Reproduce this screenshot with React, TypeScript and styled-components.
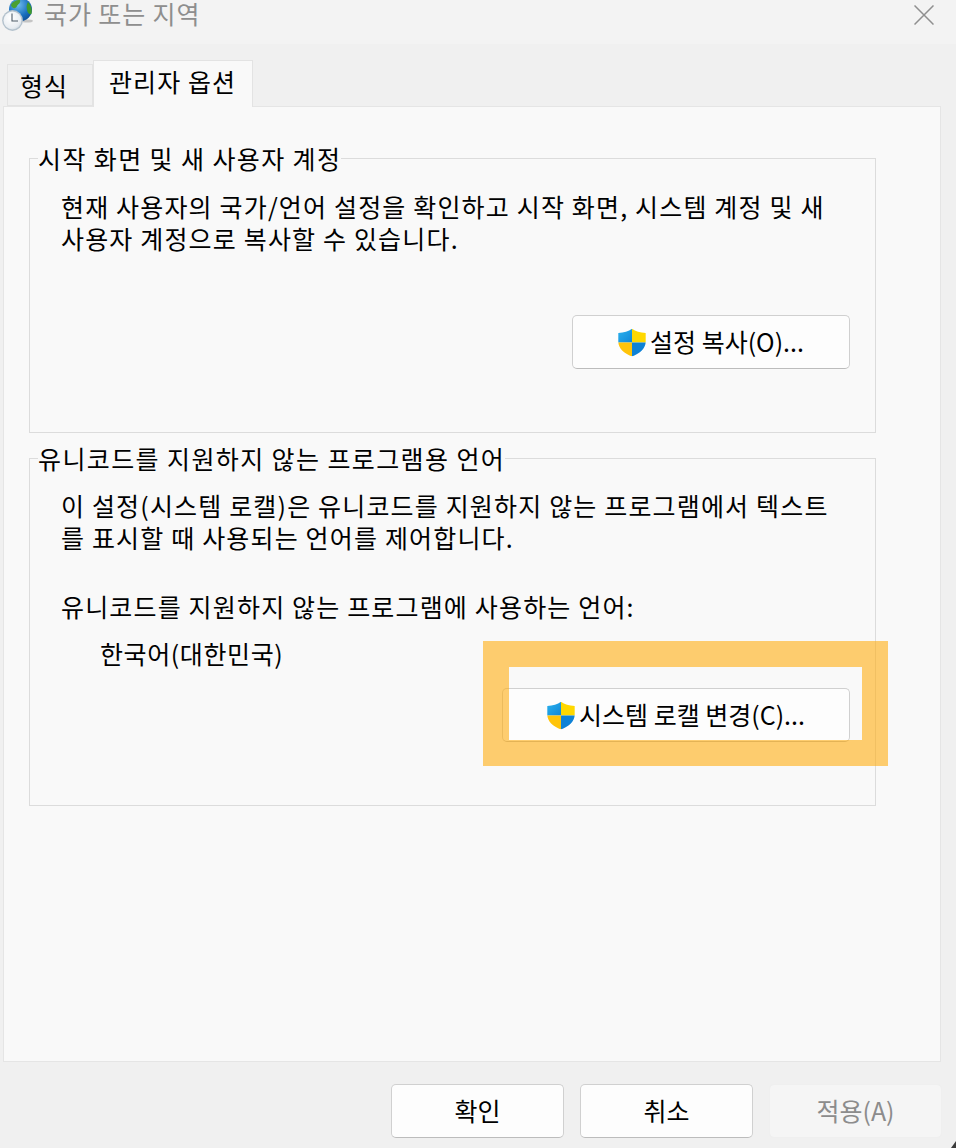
import styled, { createGlobalStyle } from "styled-components";

const GlobalStyle = createGlobalStyle`
  html, body {
    margin: 0;
    padding: 0;
    background: #f0f0f0;
  }
  body {
    font-family: "Noto Sans CJK KR", "Noto Sans", sans-serif;
    color: #000;
  }
`;

const Dialog = styled.div`
  width: 956px;
  height: 1148px;
  overflow: hidden;
  display: flex;
  flex-direction: column;
  position: relative;
`;

const TitleBar = styled.header`
  height: 44px;
  flex: none;
  background: #f3f3f3;
  display: flex;
  align-items: flex-start;
  padding: 0 22px 0 0;
  box-sizing: border-box;
`;

const TitleIcon = styled.svg`
  width: 36px;
  height: 32px;
  flex: none;
`;

const Title = styled.h1`
  margin: 0 0 0 8px;
  font-size: 25px;
  font-weight: 400;
  line-height: 26px;
  color: #8e8e8e;
  letter-spacing: 0.9px;
  flex: 1;
`;

const CloseIcon = styled.svg`
  width: 20px;
  height: 20px;
  margin-top: 5px;
  flex: none;
`;

const Tabs = styled.nav`
  height: 62px;
  flex: none;
  display: flex;
  align-items: flex-end;
  padding-left: 7px;
  position: relative;
  z-index: 1;
`;

const Tab = styled.div<{ $active?: boolean }>`
  box-sizing: border-box;
  height: ${(p) => (p.$active ? "47px" : "42px")};
  width: ${(p) => (p.$active ? "160px" : "86px")};
  margin-bottom: ${(p) => (p.$active ? "-1px" : "0")};
  padding-left: ${(p) => (p.$active ? "15px" : "12px")};
  border: 1px solid #e3e3e3;
  border-bottom: ${(p) => (p.$active ? "none" : "1px solid #e3e3e3")};
  background: ${(p) => (p.$active ? "#f9f9f9" : "#f0f0f0")};
  font-size: 25px;
  line-height: 41px;
  letter-spacing: 1.1px;
  white-space: nowrap;
`;

const Panel = styled.main`
  width: 938px;
  height: 956px;
  margin-left: 3px;
  flex: none;
  box-sizing: border-box;
  background: #f9f9f9;
  border: 1px solid #e5e5e5;
  padding: 37px 64px 0 25px;
  display: flex;
  flex-direction: column;
  gap: 11px;
`;

const Group = styled.fieldset<{ $height: number }>`
  margin: 0;
  padding: 0 25px 0 31px;
  height: ${(p) => p.$height}px;
  box-sizing: border-box;
  border: 1px solid #dcdcdc;
  display: flex;
  flex-direction: column;
`;

const Legend = styled.legend`
  margin-left: -23px;
  padding: 0;
  font-size: 25px;
  line-height: 28px;
  letter-spacing: 1.4px;
  white-space: nowrap;
`;

const Text = styled.p<{ $indent?: number; $spacing?: number }>`
  margin: 0;
  font-size: 25px;
  line-height: 32px;
  letter-spacing: ${(p) => p.$spacing ?? 1.17}px;
  white-space: nowrap;
  padding-left: ${(p) => p.$indent ?? 0}px;
`;

const Description = styled(Text)<{ $top: number }>`
  padding-top: ${(p) => p.$top}px;
`;

const LanguageLabel = styled(Text)`
  padding-top: 37px;
`;

const CurrentLocale = styled(Text)`
  padding-top: 15px;
`;

const ActionRow = styled.div<{ $top: number }>`
  display: flex;
  justify-content: flex-end;
  margin-top: ${(p) => p.$top}px;
`;

const Button = styled.button<{ $width: number }>`
  box-sizing: border-box;
  width: ${(p) => p.$width}px;
  height: 54px;
  padding: 0 0 2px;
  background: #fdfdfd;
  border: 1px solid #d0d0d0;
  border-bottom-color: #bcbcbc;
  border-radius: 5px;
  font-family: inherit;
  font-size: 25px;
  letter-spacing: 0;
  color: #000;
  display: flex;
  align-items: center;
  justify-content: center;

  &:disabled {
    background: #f5f5f5;
    border-color: #efefef;
    color: #8c8c8c;
  }
`;

const Footer = styled.footer`
  display: flex;
  justify-content: flex-end;
  gap: 16px;
  padding: 22px 14px 0 0;
`;

const ShieldIcon = styled.svg`
  width: 28px;
  height: 29px;
  margin: 2px 4px 0 0;
  flex: none;
`;

const Highlight = styled.div`
  position: absolute;
  left: 483px;
  top: 641px;
  width: 405px;
  height: 125px;
  box-sizing: border-box;
  border: 26px solid rgba(255, 174, 17, 0.6);
`;

const CornerGap = styled.div`
  position: absolute;
  right: 0;
  bottom: 0;
  width: 5px;
  height: 7px;
  background: #3c3c3c;
  clip-path: polygon(100% 0, 100% 100%, 0 100%);
`;

const Shield = ({ id }: { id: string }) => (
  <ShieldIcon viewBox="0 0 28 28" aria-hidden="true">
    <defs>
      <clipPath id={id}>
        <path d="M14 0.3C10.5 3 6 4.2 0.3 4.4V13C0.3 20 6 25 14 27.9C22 25 27.7 20 27.7 13V4.4C22 4.2 17.5 3 14 0.3Z" />
      </clipPath>
      <linearGradient id={`${id}-b`} x1="0" y1="0" x2="1" y2="1">
        <stop offset="0" stopColor="#2cb4ee" />
        <stop offset="1" stopColor="#0f86d8" />
      </linearGradient>
    </defs>
    <g clipPath={`url(#${id})`}>
      <rect x="0" y="0" width="14" height="14" fill={`url(#${id}-b)`} />
      <rect x="14" y="0" width="14" height="14" fill="#ffd800" />
      <rect x="0" y="14" width="14" height="14" fill="#ffc40a" />
      <rect x="14" y="14" width="14" height="14" fill="#0f82d6" />
    </g>
  </ShieldIcon>
);

const RegionIcon = () => (
  <TitleIcon viewBox="0 0 36 32" aria-hidden="true">
    <defs>
      <radialGradient id="globe" cx="0.4" cy="0.3" r="0.8">
        <stop offset="0" stopColor="#6fbcec" />
        <stop offset="0.6" stopColor="#1a70c0" />
        <stop offset="1" stopColor="#0d4a90" />
      </radialGradient>
      <radialGradient id="clock" cx="0.4" cy="0.35" r="0.8">
        <stop offset="0" stopColor="#ffffff" />
        <stop offset="0.7" stopColor="#e8edf2" />
        <stop offset="1" stopColor="#c2ced8" />
      </radialGradient>
    </defs>
    <ellipse cx="27" cy="21" rx="6" ry="1.6" fill="#c4c4c4" />
    <circle cx="20.5" cy="9.5" r="11.5" fill="url(#globe)" />
    <path d="M11 5C12 2 16 0 20 0C21 3 18 4 17 6C16 9 12 9 11 5Z" fill="#4aa032" />
    <path d="M28 2C31 5 32.5 9 31.5 14C29 15 27 12 27 9C26 6 27 4 28 2Z" fill="#3f9a2c" />
    <circle cx="12.5" cy="20.5" r="10.4" fill="#b4c2cd" />
    <circle cx="12.5" cy="20.5" r="9" fill="url(#clock)" />
    <path d="M12 13.5V21H18" fill="none" stroke="#4f5c68" strokeWidth="1.1" />
  </TitleIcon>
);

export default function App() {
  return (
    <>
      <GlobalStyle />
      <Dialog>
        <TitleBar>
          <RegionIcon />
          <Title>국가 또는 지역</Title>
          <CloseIcon viewBox="0 0 20 20" aria-hidden="true">
            <path d="M0.5 0.5L19.5 19.5M19.5 0.5L0.5 19.5" stroke="#8f8f8f" strokeWidth="1.5" fill="none" />
          </CloseIcon>
        </TitleBar>
        <Tabs>
          <Tab>형식</Tab>
          <Tab $active>관리자 옵션</Tab>
        </Tabs>
        <Panel>
          <Group $height={289}>
            <Legend>시작 화면 및 새 사용자 계정</Legend>
            <Description $top={18}>
              현재 사용자의 국가/언어 설정을 확인하고 시작 화면, 시스템 계정 및 새
              <br />
              사용자 계정으로 복사할 수 있습니다.
            </Description>
            <ActionRow $top={61}>
              <Button $width={278}>
                <Shield id="shield-copy" />
                설정 복사(O)...
              </Button>
            </ActionRow>
          </Group>
          <Group $height={362}>
            <Legend>유니코드를 지원하지 않는 프로그램용 언어</Legend>
            <Description $top={17}>
              이 설정(시스템 로캘)은 유니코드를 지원하지 않는 프로그램에서 텍스트
              <br />를 표시할 때 사용되는 언어를 제어합니다.
            </Description>
            <LanguageLabel>유니코드를 지원하지 않는 프로그램에 사용하는 언어:</LanguageLabel>
            <CurrentLocale $indent={39} $spacing={0.6}>
              한국어(대한민국)
            </CurrentLocale>
            <ActionRow $top={19}>
              <Button $width={348}>
                <Shield id="shield-locale" />
                시스템 로캘 변경(C)...
              </Button>
            </ActionRow>
          </Group>
        </Panel>
        <Footer>
          <Button $width={173}>확인</Button>
          <Button $width={173}>취소</Button>
          <Button $width={173} disabled>
            적용(A)
          </Button>
        </Footer>
        <Highlight />
        <CornerGap />
      </Dialog>
    </>
  );
}
